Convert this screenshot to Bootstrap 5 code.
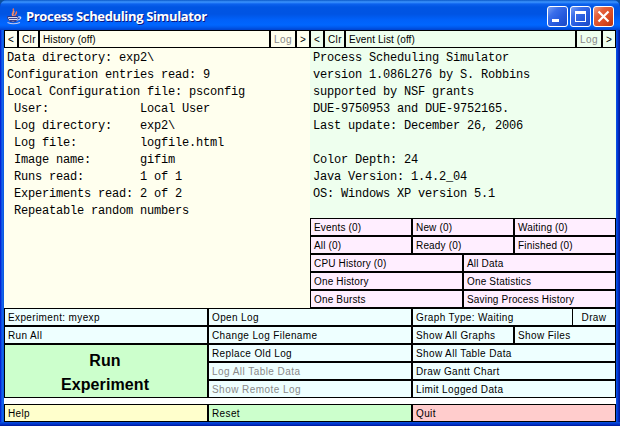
<!DOCTYPE html>
<html lang="en">
<head>
<meta charset="utf-8">
<meta name="viewport" content="width=device-width, initial-scale=1">
<title>Process Scheduling Simulator</title>
<link href="https://cdn.jsdelivr.net/npm/bootstrap@5.3.0/dist/css/bootstrap.min.css" rel="stylesheet">
<style>
body{width:620px;height:426px;background:#0b4f9e;font-family:"Liberation Sans",Arial,sans-serif;color:#000}
.frame{width:620px;height:426px;border-radius:7px 7px 0 0;padding:0 4px 4px;
 background:linear-gradient(90deg,#0019cf 0,#0831d9 1px,#166aee 2px,#0855dd 4px,#0855dd 616px,#0548e6 617px,#0030c8 618px,#001590 620px)}
.titlebar{height:30px;margin:0 -4px;padding:3px 6px 0 6px;border-radius:7px 7px 0 0;
 background:linear-gradient(180deg,#0a58c8 0,#3d95ff 2px,#0c62ee 4px,#0055e3 7px,#0054e3 14px,#0061fa 20px,#0066ff 25px,#005bf0 27px,#0043cf 30px)}
.title-text{font:bold 13px "Open Sans","Noto Sans",sans-serif;color:#fff;text-shadow:1px 1px 0 #0a1883;letter-spacing:-.35px;line-height:27px;margin-left:3px}
.winbtns{gap:2px}
.winbtn{width:21px;height:21px;border:1px solid #fff;border-radius:3px;background:linear-gradient(135deg,#7aa0f4 0,#3a6eea 30%,#2458dc 65%,#1c49c4 100%)}
.winbtn.shut{background:linear-gradient(135deg,#f0a088 0,#e4603c 30%,#da4a22 65%,#b93410 100%)}
.client{height:392px;background:#fff}
.cell{height:18px;border:1px solid #000;padding:0 0 0 3px;font-size:10px;line-height:17px;letter-spacing:.37px;white-space:pre;overflow:hidden}
.pink .cell{letter-spacing:.17px}
.cell.tight{letter-spacing:.1px}
.cell.off{color:#888;letter-spacing:.45px}
.wa{width:14px}.wb{width:21px}.wc{width:26px}.wd{width:44px}
.side{width:306px;height:278px}
.ivory{background:#ffffee}.mint{background:#eeffee}.pink{background:#ffeeff}.aqua{background:#eeffff}
.green{background:#ccffcc}.yellow{background:#ffffcc}.rose{background:#ffcccc}
.console{margin:0;padding:2px 0 0 3px;font:12px/17px "Liberation Mono","Courier New",monospace;letter-spacing:-.2px;overflow:hidden;color:#000}
.col3{width:204px}
.run{height:54px;border:1px solid #000;padding-top:4px;padding-right:2px;font-weight:bold;font-size:16px;line-height:24px;text-align:center;letter-spacing:.1px}
.foot{margin-top:6px}
.bottomedge{height:4px;margin:0 -4px;background:linear-gradient(#0855dd,#0441d8 1px,#0028b8 3px,#001590)}
</style>
<script src="https://cdn.jsdelivr.net/npm/bootstrap@5.3.0/dist/js/bootstrap.bundle.min.js"></script>
</head>
<body class="overflow-hidden m-0">
<div class="frame">
 <header class="titlebar d-flex align-items-center">
  <svg width="17" height="18" viewBox="0 0 17 18" fill="none">
   <path d="M7.500 8C4 5.500 9.500 4 7 .5M9 8.500C7.500 7 12 5.500 10 3.500" stroke="#ef7350" stroke-width="1.500"/>
   <path d="M7 8C6 6 8.500 5 8 3" stroke="#ffc7a0" stroke-width=".7"/>
   <path d="M1.500 8.500H12V11Q11 14 7 14T2 11Z" fill="#d8daf0" stroke="#283489"/>
   <path d="M12 9Q15.500 8.500 14.500 10.500Q13.500 12 11 12" stroke="#d8daf0" stroke-width="1.200"/>
   <path d="M3 10.500H11M4 12.500H10" stroke="#343f91"/>
   <path d="M1.500 14.500Q7 17 14 14.500" stroke="#c5caec" stroke-width="1.200"/>
  </svg>
  <div class="title-text flex-grow-1 text-nowrap">Process Scheduling Simulator</div>
  <div class="d-flex winbtns">
   <div class="winbtn"><svg class="d-block" width="19" height="19"><path d="M4 12h7v3H4z" fill="#fff"/></svg></div>
   <div class="winbtn"><svg class="d-block" width="19" height="19"><path d="M4 4h11v11H4zM5 7v7h9V7z" fill="#fff" fill-rule="evenodd"/></svg></div>
   <div class="winbtn shut"><svg class="d-block" width="19" height="19"><path d="M4.500 4.500l10 10M14.500 4.500l-10 10" stroke="#fff" stroke-width="2.200"/></svg></div>
  </div>
 </header>
 <main class="client">
  <div class="d-flex">
   <section class="side ivory">
    <div class="d-flex">
     <div class="cell wa">&lt;</div><div class="cell wb">Clr</div><div class="cell tight flex-grow-1">History (off)</div><div class="cell wc off">Log</div><div class="cell wa">&gt;</div>
    </div>
<pre class="console">Data directory: exp2\
Configuration entries read: 9
Local Configuration file: psconfig
 User:             Local User
 Log directory:    exp2\
 Log file:         logfile.html
 Image name:       gifim
 Runs read:        1 of 1
 Experiments read: 2 of 2
 Repeatable random numbers</pre>
   </section>
   <section class="side mint d-flex flex-column">
    <div class="d-flex">
     <div class="cell wa">&lt;</div><div class="cell wb">Clr</div><div class="cell tight flex-grow-1">Event List (off)</div><div class="cell wc off">Log</div><div class="cell wa">&gt;</div>
    </div>
<pre class="console flex-grow-1">Process Scheduling Simulator
version 1.086L276 by S. Robbins
supported by NSF grants
DUE-9750953 and DUE-9752165.
Last update: December 26, 2006

Color Depth: 24
Java Version: 1.4.2_04
OS: Windows XP version 5.1</pre>
    <div class="row row-cols-3 g-0 pink">
     <div class="cell">Events (0)</div><div class="cell">New (0)</div><div class="cell">Waiting (0)</div>
     <div class="cell">All (0)</div><div class="cell">Ready (0)</div><div class="cell">Finished (0)</div>
    </div>
    <div class="row row-cols-2 g-0 pink">
     <div class="cell">CPU History (0)</div><div class="cell">All Data</div>
     <div class="cell">One History</div><div class="cell">One Statistics</div>
     <div class="cell">One Bursts</div><div class="cell">Saving Process History</div>
    </div>
   </section>
  </div>
  <section class="d-flex">
   <div class="col3 aqua">
    <div class="cell">Experiment: myexp</div>
    <div class="cell">Run All</div>
    <div class="run green d-flex flex-column justify-content-center"><div>Run</div><div>Experiment</div></div>
   </div>
   <div class="col3 aqua">
    <div class="cell">Open Log</div>
    <div class="cell">Change Log Filename</div>
    <div class="cell">Replace Old Log</div>
    <div class="cell off">Log All Table Data</div>
    <div class="cell off">Show Remote Log</div>
   </div>
   <div class="col3 aqua">
    <div class="d-flex"><div class="cell border-end-0 flex-grow-1">Graph Type: Waiting</div><div class="cell wd text-center p-0">Draw</div></div>
    <div class="d-flex"><div class="cell w-50">Show All Graphs</div><div class="cell w-50">Show Files</div></div>
    <div class="cell">Show All Table Data</div>
    <div class="cell">Draw Gantt Chart</div>
    <div class="cell">Limit Logged Data</div>
   </div>
  </section>
  <footer class="d-flex foot">
   <div class="cell col3 yellow">Help</div><div class="cell col3 green">Reset</div><div class="cell col3 rose">Quit</div>
  </footer>
 </main>
 <div class="bottomedge"></div>
</div>
</body>
</html>
